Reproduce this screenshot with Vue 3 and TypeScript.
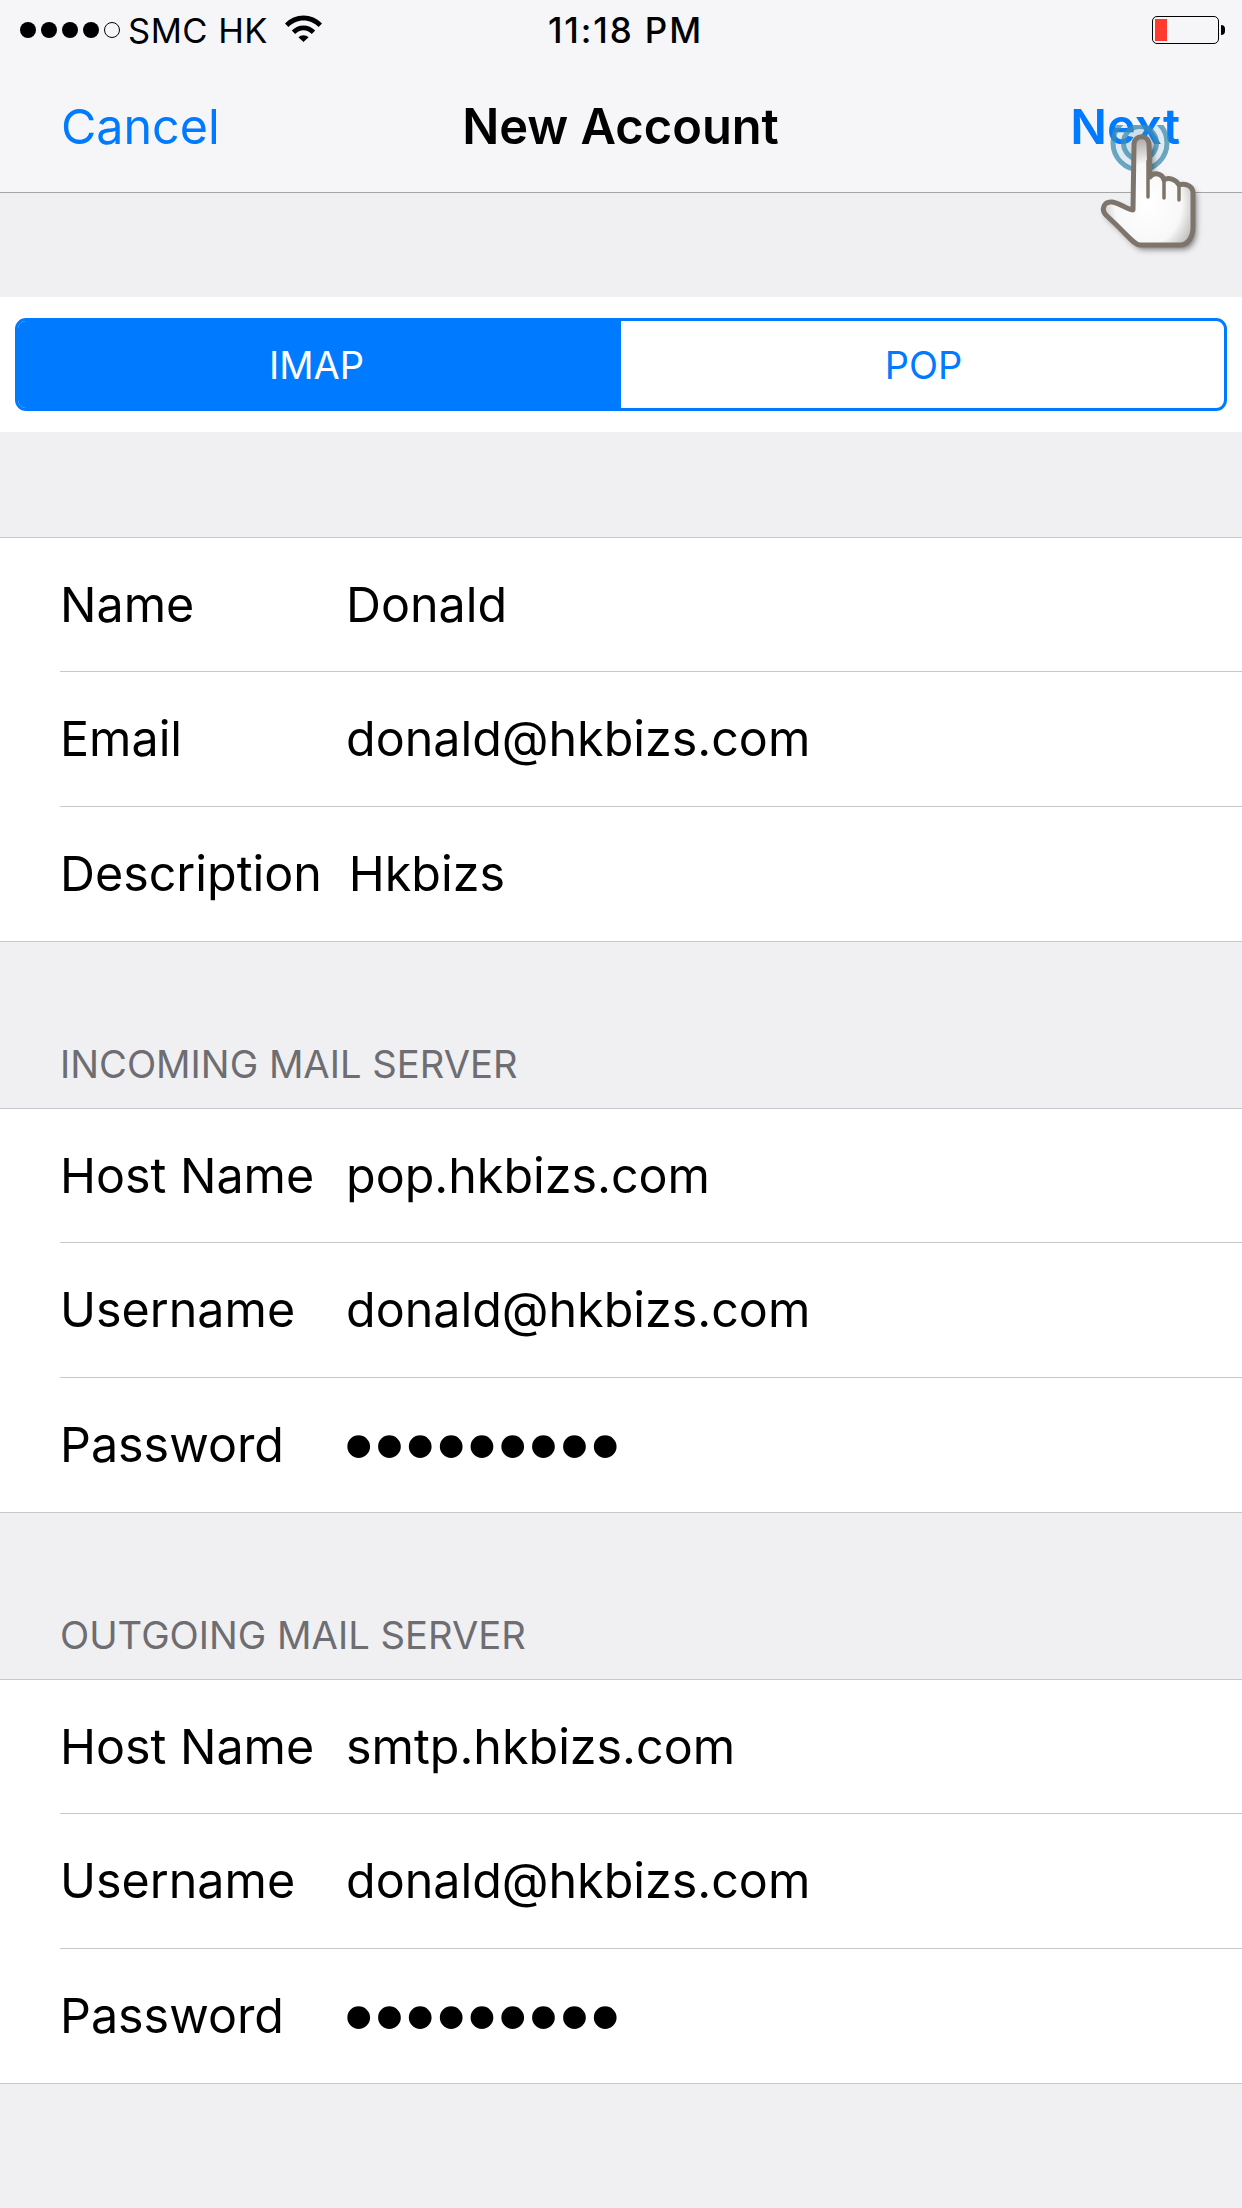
<script setup lang="ts">
// 新账户表单：分组数据
interface Field {
  label: string
  value: string
  secret?: boolean
}

interface Group {
  title?: string
  fields: Field[]
}

const groups: Group[] = [
  {
    fields: [
      { label: 'Name', value: 'Donald' },
      { label: 'Email', value: 'donald@hkbizs.com' },
      { label: 'Description', value: 'Hkbizs' },
    ],
  },
  {
    title: 'INCOMING MAIL SERVER',
    fields: [
      { label: 'Host Name', value: 'pop.hkbizs.com' },
      { label: 'Username', value: 'donald@hkbizs.com' },
      { label: 'Password', value: '•••••••••', secret: true },
    ],
  },
  {
    title: 'OUTGOING MAIL SERVER',
    fields: [
      { label: 'Host Name', value: 'smtp.hkbizs.com' },
      { label: 'Username', value: 'donald@hkbizs.com' },
      { label: 'Password', value: '•••••••••', secret: true },
    ],
  },
]
</script>

<template>
  <div class="screen">
    <header class="topbar">
      <div class="status">
        <div class="status-left">
          <span class="signal">
            <i v-for="n in 4" :key="n" class="dot"></i>
            <i class="dot empty"></i>
          </span>
          <span class="carrier">SMC HK</span>
          <svg class="wifi" viewBox="0 0 37 27">
            <path d="M0 8.5C5 3.2 11.5 0.5 18.5 0.5S32 3.2 37 8.5L33.6 12C29.5 7.8 24.2 5.4 18.5 5.4S7.5 7.8 3.4 12Z" />
            <path d="M6.8 15.5C10 12.3 14.1 10.4 18.5 10.4S27 12.3 30.2 15.5L26.8 19C24.5 16.7 21.7 15.3 18.5 15.3S12.5 16.7 10.2 19Z" />
            <path d="M13.4 22.2C14.8 20.9 16.6 20.2 18.5 20.2S22.2 20.9 23.6 22.2L18.5 27Z" />
          </svg>
        </div>
        <span class="clock">11:18 PM</span>
        <div class="battery">
          <div class="battery-body"><div class="battery-level"></div></div>
          <div class="battery-nub"></div>
        </div>
      </div>
      <nav class="navbar">
        <span class="nav-btn">Cancel</span>
        <span class="nav-title">New Account</span>
        <span class="nav-btn strong">Next</span>
      </nav>
    </header>

    <div class="segment-band">
      <div class="segment">
        <div class="segment-item active">IMAP</div>
        <div class="segment-item">POP</div>
      </div>
    </div>

    <section v-for="(group, i) in groups" :key="i" class="group">
      <h2 class="group-head">{{ group.title }}</h2>
      <div class="rows">
        <div v-for="field in group.fields" :key="field.label" class="row">
          <span class="label">{{ field.label }}</span>
          <span class="value" :class="{ secret: field.secret }">{{ field.value }}</span>
        </div>
      </div>
    </section>

    <!-- 点击提示手势，盖在 Next 上 -->
    <svg class="hand" viewBox="0 0 130 150">
      <defs>
        <radialGradient id="handFill" cx="0.5" cy="0.62" r="0.62">
          <stop offset="0" stop-color="#ffffff" />
          <stop offset="0.6" stop-color="#f8f8f8" />
          <stop offset="1" stop-color="#a9a7a4" />
        </radialGradient>
        <filter id="handShadow" x="-20%" y="-20%" width="150%" height="150%">
          <feGaussianBlur stdDeviation="3" />
        </filter>
      </defs>
      <circle cx="50" cy="18" r="27" class="ring" />
      <circle cx="50" cy="18" r="16.5" class="ring" />
      <path class="hand-shadow" filter="url(#handShadow)" transform="translate(3 4)" d="M43 85L44 20C44 9 59 9 59 20L60 52C64 47 72 48 74 55C78 52 86 54 89 60C94 58 103 60 103 68L103 102C103 112 98 120 90 120L50 120C44 120 40 112 17 91C10 85 14 76 22 77C30 78 36 84 43 85Z" />
      <path class="hand-body" d="M43 85L44 20C44 9 59 9 59 20L60 52C64 47 72 48 74 55C78 52 86 54 89 60C94 58 103 60 103 68L103 102C103 112 98 120 90 120L50 120C44 120 40 112 17 91C10 85 14 76 22 77C30 78 36 84 43 85Z" />
      <path class="hand-crease" d="M58 36V72M74 56V73M89 61V75" />
    </svg>
  </div>
</template>

<style>
html,
body {
  margin: 0;
  background: #f0f0f2;
}
</style>

<style scoped>
.screen {
  position: relative;
  width: 1242px;
  height: 2208px;
  overflow: hidden;
  background: #f0f0f2;
  font-family: Inter, "Liberation Sans", sans-serif;
  color: #000;
}

.topbar {
  height: 193px;
  box-sizing: border-box;
  background: #f6f6f8;
  border-bottom: 1px solid #a5a5a8;
}

.status {
  height: 60px;
  padding: 0 17px 0 20px;
  display: grid;
  grid-template-columns: 1fr auto 1fr;
  align-items: center;
}

.status-left {
  display: flex;
  align-items: center;
}

.signal {
  display: flex;
  gap: 5px;
  margin-right: 8px;
}

.dot {
  width: 16px;
  height: 16px;
  border-radius: 50%;
  background: #000;
  box-sizing: border-box;
}

.dot.empty {
  background: none;
  border: 1px solid #000;
}

.carrier {
  font-size: 34.5px;
  letter-spacing: 0.5px;
}

.wifi {
  width: 37px;
  height: 27px;
  margin-left: 17px;
  margin-top: -3px;
}

.clock {
  padding-left: 6px;
  font-size: 35px;
  font-weight: 500;
  letter-spacing: 1.9px;
}

.battery {
  justify-self: end;
  display: flex;
  align-items: center;
  gap: 2px;
}

.battery-body {
  width: 67px;
  height: 28px;
  box-sizing: border-box;
  border: 1.5px solid #000;
  border-radius: 5px;
  padding: 2px;
}

.battery-level {
  width: 12px;
  height: 100%;
  background: #ff3b30;
}

.battery-nub {
  width: 4px;
  height: 10px;
  background: #000;
  border-radius: 0 4px 4px 0;
}

.navbar {
  height: 132px;
  padding: 0 62px 0 61px;
  display: grid;
  grid-template-columns: 1fr auto 1fr;
  align-items: center;
  font-size: 48.4px;
}

.nav-btn {
  color: #007aff;
}

.nav-btn.strong {
  justify-self: end;
  font-weight: 600;
}

.nav-title {
  font-size: 48.8px;
  font-weight: 600;
}

.segment-band {
  margin-top: 104px;
  padding: 21px 15px;
  background: #fff;
}

.segment {
  height: 93px;
  box-sizing: border-box;
  display: grid;
  grid-template-columns: 1fr 1fr;
  border: 3px solid #007aff;
  border-radius: 11px;
  overflow: hidden;
}

.segment-item {
  padding-left: 2px;
  display: flex;
  align-items: center;
  justify-content: center;
  font-size: 38px;
  color: #007aff;
}

.segment-item.active {
  padding: 0 6px 0 0;
  color: #fff;
  background: #007aff;
}

.group-head {
  height: 105px;
  margin: 0;
  padding: 0 60px 21px;
  box-sizing: border-box;
  display: flex;
  align-items: flex-end;
  font-size: 38.2px;
  font-weight: 400;
  color: #6d6d72;
}

.group:not(:first-of-type) .group-head {
  height: 166px;
}

.rows {
  background: #fff;
  border-top: 1px solid #c8c7cc;
  border-bottom: 1px solid #c8c7cc;
}

.row {
  height: 134.33px;
  box-sizing: border-box;
  margin-left: 60px;
  display: flex;
  align-items: center;
  font-size: 48.4px;
}

.row:not(:last-child) {
  border-bottom: 1px solid #c8c7cc;
}

.label {
  min-width: 286px;
  padding-right: 27px;
  box-sizing: border-box;
}

.secret {
  font-family: "Liberation Sans", sans-serif;
  font-size: 84px;
  line-height: 1;
  letter-spacing: 1.4px;
  margin-left: -2px;
}

.hand {
  position: absolute;
  left: 1090px;
  top: 125px;
  width: 130px;
  height: 150px;
}

.ring {
  fill: rgba(70, 150, 190, 0.12);
  stroke: rgba(60, 140, 175, 0.75);
  stroke-width: 5;
}

.hand-shadow {
  fill: rgba(0, 0, 0, 0.55);
}

.hand-body {
  fill: url(#handFill);
  stroke: #7d756c;
  stroke-width: 5;
  stroke-linejoin: round;
}

.hand-crease {
  fill: none;
  stroke: #7d756c;
  stroke-width: 3.5;
  stroke-linecap: round;
}
</style>
